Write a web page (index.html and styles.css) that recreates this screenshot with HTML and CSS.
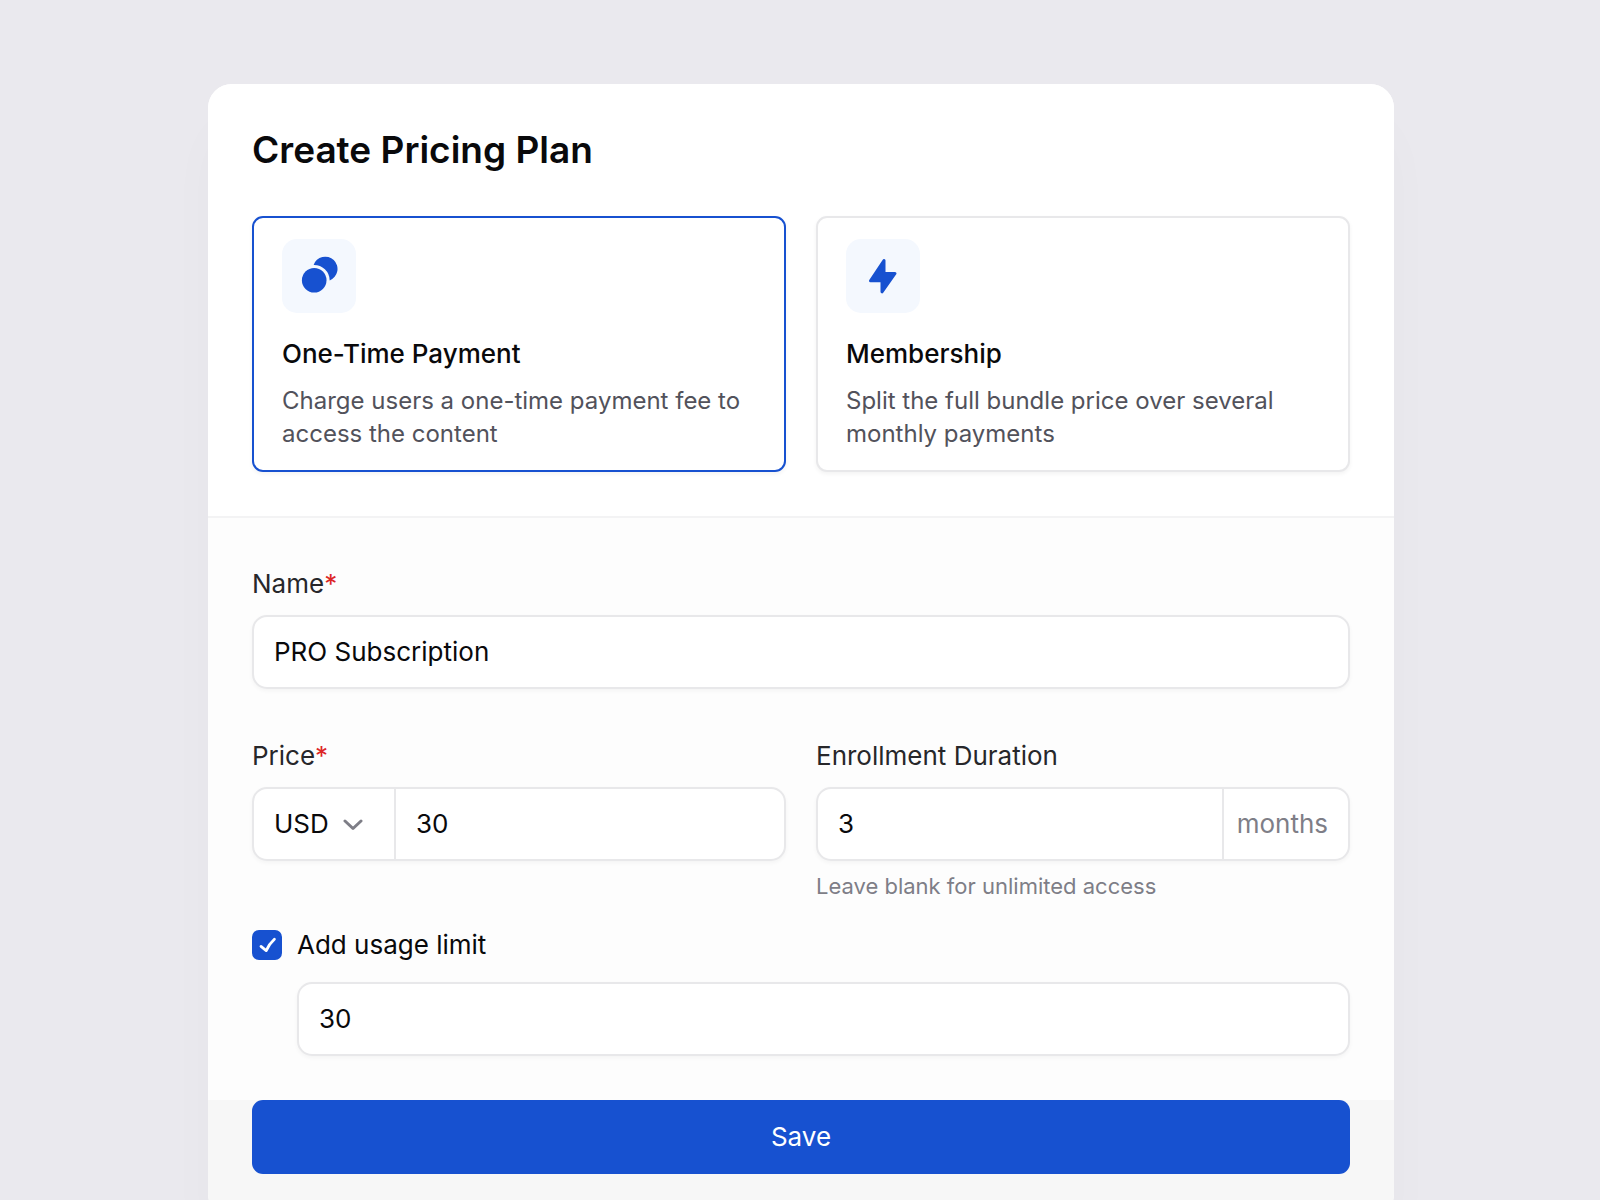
FILE: index.html
```
<!DOCTYPE html>
<html lang="en">
<head>
    <meta charset="UTF-8">
    <meta name="viewport" content="width=device-width, initial-scale=1.0">
    <title>Create Pricing Plan</title>
    <link rel="stylesheet" href="styles.css">
</head>
<body>
    <form class="plan">
        <header class="plan-header">
            <h1>Create Pricing Plan</h1>
            <div class="types">
                <button type="button" class="type active">
                    <span class="type-icon">
                        <svg width="74" height="74" viewBox="0 0 74 74" fill="currentColor">
                            <circle cx="32.2" cy="41.2" r="12.3"/>
                            <path d="M31.6 25.9A12.3 12.3 0 1 1 47.7 41.4A15.7 15.7 0 0 0 31.6 25.9Z"/>
                        </svg>
                    </span>
                    <span class="type-title">One-Time Payment</span>
                    <span class="type-text">Charge users a one-time payment fee to access the content</span>
                </button>
                <button type="button" class="type">
                    <span class="type-icon">
                        <svg width="74" height="74" viewBox="0 0 74 74" fill="currentColor" stroke="currentColor" stroke-width="3" stroke-linejoin="round">
                            <path d="M38 21.5V34.4H49L36 52.8V41.8H24.5Z"/>
                        </svg>
                    </span>
                    <span class="type-title">Membership</span>
                    <span class="type-text">Split the full bundle price over several monthly payments</span>
                </button>
            </div>
        </header>

        <div class="plan-body">
            <div class="field">
                <label for="name">Name<span class="required">*</span></label>
                <div class="box">
                    <input type="text" id="name" value="PRO Subscription">
                </div>
            </div>

            <div class="row">
                <div class="field">
                    <label for="price">Price<span class="required">*</span></label>
                    <div class="box">
                        <div class="currency">
                            <select aria-label="Currency">
                                <option>USD</option>
                                <option>EUR</option>
                                <option>GBP</option>
                            </select>
                            <svg class="chevron" width="20" height="12" viewBox="0 0 20 12" fill="none" stroke="currentColor" stroke-width="3" stroke-linecap="round" stroke-linejoin="round">
                                <path d="M2 2L10 9.5L18 2"/>
                            </svg>
                        </div>
                        <input type="text" id="price" value="30">
                    </div>
                </div>
                <div class="field">
                    <label for="duration">Enrollment Duration</label>
                    <div class="box">
                        <input type="text" id="duration" value="3">
                        <span class="unit">months</span>
                    </div>
                    <p class="hint">Leave blank for unlimited access</p>
                </div>
            </div>

            <div class="limit">
                <div class="check">
                    <input type="checkbox" id="limit" checked>
                    <svg class="tick" width="30" height="30" viewBox="0 0 30 30" fill="none" stroke="currentColor" stroke-width="2.8" stroke-linecap="round" stroke-linejoin="round">
                        <path d="M9 16.4L14.2 20.6Q17 14 22.4 9.2"/>
                    </svg>
                    <label for="limit">Add usage limit</label>
                </div>
                <div class="box limit-box">
                    <input type="text" aria-label="Usage limit" value="30">
                </div>
            </div>
        </div>

        <footer class="plan-footer">
            <button type="submit" class="save">Save</button>
        </footer>
    </form>
</body>
</html>
```
FILE: styles.css
```
* {
    box-sizing: border-box;
}

body {
    margin: 0;
    padding: 84px 206px 84px 208px;
    font-family: Inter, "Liberation Sans", sans-serif;
    font-size: 26px;
    line-height: 36px;
    color: #09090b;
    background-color: #eae9ee;
}

button, input, select {
    font: inherit;
    color: inherit;
}

.plan {
    background-color: #fdfdfd;
    border-radius: 24px;
    overflow: hidden;
    box-shadow: 0 40px 60px -10px rgba(30, 20, 60, 0.03);
}

.plan-header {
    padding: 44px;
    background-color: white;
    border-bottom: 2px solid #f3f3f4;
}

h1 {
    margin: 0 0 44px;
    font-size: 37px;
    line-height: 44px;
    font-weight: 600;
}

.types, .row {
    display: grid;
    grid-template-columns: repeat(2, minmax(0, 1fr));
    gap: 30px;
}

/* plan type cards */
.type {
    display: flex;
    flex-direction: column;
    align-items: flex-start;
    padding: 21px 28px 20px;
    text-align: left;
    background-color: white;
    border: 2px solid #e8e8ea;
    border-radius: 11px;
    box-shadow: 0 2px 4px rgba(0, 0, 0, 0.05);
    cursor: pointer;
}

.type.active {
    border-color: #1751d0;
}

.type-icon {
    height: 74px;
    margin-bottom: 23px;
    color: #1751d0;
    background-color: #f4f8fe;
    border-radius: 15px;
}

.type-title {
    margin-bottom: 12px;
    font-weight: 500;
}

.type-text {
    font-size: 24px;
    line-height: 33px;
    color: #52525b;
}

/* form fields */
.plan-body {
    padding: 48px 44px 44px;
}

.field {
    display: flex;
    flex-direction: column;
}

.field label {
    margin-bottom: 13px;
    color: #27272a;
}

.required {
    color: #dc2626;
}

.box {
    display: flex;
    height: 74px;
    background-color: white;
    border: 2px solid #e8e8ea;
    border-radius: 15px;
    box-shadow: 0 2px 4px rgba(0, 0, 0, 0.04);
    overflow: hidden;
}

.box input {
    flex: 1;
    min-width: 0;
    padding: 0 20px;
    border: none;
    outline: none;
    background: none;
}

.row {
    margin-top: 49px;
}

.currency {
    position: relative;
    display: flex;
    border-right: 2px solid #e8e8ea;
}

.currency select {
    width: 140px;
    padding: 0 20px;
    appearance: none;
    border: none;
    outline: none;
    background: none;
}

.chevron {
    position: absolute;
    right: 31px;
    top: 30px;
    color: #7e7e87;
    pointer-events: none;
}

.unit {
    display: flex;
    align-items: center;
    padding: 0 20px 0 13px;
    color: #7e7e87;
    border-left: 2px solid #e8e8ea;
}

.hint {
    margin: 10px 0 0;
    font-size: 22px;
    line-height: 30px;
    color: #7e7e87;
}

.limit {
    margin-top: 29px;
}

.check {
    position: relative;
    display: flex;
    align-items: center;
    gap: 15px;
    height: 30px;
}

.check input {
    width: 30px;
    height: 30px;
    margin: 0;
    appearance: none;
    background-color: white;
    border: 2px solid #e8e8ea;
    border-radius: 7px;
}

.check input:checked {
    background-color: #1751d0;
    border-color: #1751d0;
}

.tick {
    position: absolute;
    left: 0;
    top: 0;
    color: white;
    pointer-events: none;
}

.limit-box {
    margin: 22px 0 0 45px;
}

.plan-footer {
    padding: 0 44px 44px;
    background-color: #f7f7f7;
}

.save {
    display: block;
    width: 100%;
    height: 74px;
    color: white;
    background-color: #1751d0;
    border: none;
    border-radius: 11px;
    cursor: pointer;
}
```
